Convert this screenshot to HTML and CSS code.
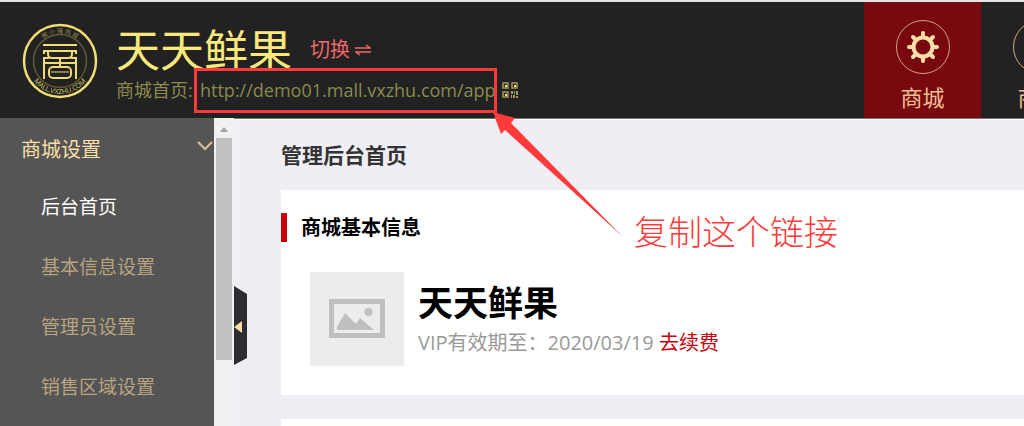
FILE: index.html
```html
<!DOCTYPE html>
<html lang="zh-CN">
<head>
    <meta charset="UTF-8">
    <meta name="viewport" content="width=device-width, initial-scale=1.0">
    <title>管理后台首页</title>
    <link rel="stylesheet" href="styles.css">
</head>
<body>
    <header class="header">
        <svg class="logo" viewBox="0 0 76 76" aria-hidden="true">
            <defs>
                <path id="arc-top" d="M10 38a28 28 0 0 1 56 0"/>
                <path id="arc-bottom" d="M5 38a33 33 0 0 0 66 0"/>
            </defs>
            <circle cx="38" cy="38" r="36" fill="none" stroke="#efdc72" stroke-width="2.5"/>
            <circle cx="38" cy="38" r="26.5" fill="none" stroke="#5f5936" stroke-width="1.5"/>
            <text class="logo-top" text-anchor="middle"><textPath href="#arc-top" startOffset="50%">微 小 猪 商 城</textPath></text>
            <text class="logo-bottom" text-anchor="middle"><textPath href="#arc-bottom" startOffset="50%">MALL.VXZHU.COM</textPath></text>
            <g fill="none" stroke="#efdc72" stroke-width="2">
                <path d="M21 22h34M21 28h34M22 27v4M54 27v4M22 56V35h5M54 56V35h-5M22 40h32M38 35v9"/>
                <path d="M26 28v3q0 4 4 4h16q4 0 4-4v-3"/>
                <rect x="27" y="44" width="22" height="11" rx="4"/>
                <path d="M29 49h18" stroke-width="1"/>
            </g>
        </svg>
        <div class="shop">
            <div class="shop-top">
                <span class="shop-name">天天鲜果</span>
                <a class="switch" href="#">切换
                    <svg width="16" height="14" viewBox="0 0 16 14" aria-hidden="true"><path d="M0 5h15l-4-3M16 9H1l4 3" fill="none" stroke="#f0686a" stroke-width="1.5"/></svg>
                </a>
            </div>
            <div class="shop-url">
                <span class="url-label">商城首页:</span>
                <a class="url" href="#">http://demo01.mall.vxzhu.com/app</a>
                <svg class="qr" viewBox="0 0 16 16" aria-hidden="true">
                    <path d="M1 1h5v5H1zM10 1h5v5h-5zM1 10h5v5H1z" fill="none" stroke="#a39b57" stroke-width="1.5"/>
                    <path d="M3 3h2v2H3zM12 3h2v2h-2zM3 12h2v2H3z" fill="#f5e98c"/>
                    <path d="M9 9h2v3H9zM12 9h1v3h-1zM14 9h2v4h-2zM9 13h1v3H9zM11 13h2v3h-2zM14 14h2v2h-2z" fill="#a39b57"/>
                </svg>
            </div>
        </div>
        <nav class="nav">
            <a class="nav-item active" href="#">
                <span class="nav-icon">
                    <svg width="34" height="34" viewBox="-17 -17 34 34" aria-hidden="true">
                        <circle r="9.5" fill="none" stroke="#f8dfa8" stroke-width="4"/>
                        <g stroke="#f8dfa8" stroke-width="4" stroke-linecap="round">
                            <path d="M0-10V-14M0 10V14M-10 0H-14M10 0H14M-7-7l-3-3M7 7l3 3M-7 7l-3 3M7-7l3-3"/>
                        </g>
                    </svg>
                </span>
                <span>商城</span>
            </a>
            <a class="nav-item" href="#">
                <span class="nav-icon"></span>
                <span>商品</span>
            </a>
        </nav>
    </header>

    <div class="layout">
        <aside class="sidebar">
            <button class="menu-title" type="button">
                <span>商城设置</span>
                <svg width="16" height="14" viewBox="0 0 16 14" aria-hidden="true"><path d="M1 1l7 7 7-7" fill="none" stroke="#d9c296" stroke-width="2"/></svg>
            </button>
            <ul class="menu">
                <li><a class="current" href="#">后台首页</a></li>
                <li><a href="#">基本信息设置</a></li>
                <li><a href="#">管理员设置</a></li>
                <li><a href="#">销售区域设置</a></li>
            </ul>
        </aside>
        <div class="scrollbar">
            <div class="scroll-up"></div>
            <div class="scroll-thumb"></div>
        </div>
        <main class="main">
            <button class="collapse" type="button" aria-label="收起">
                <svg width="14" height="80" viewBox="0 0 14 80" aria-hidden="true">
                    <path d="M0 0l13 8v64L0 79z" fill="#2f2c31"/>
                    <path d="M0 41l8-6v12z" fill="#f8dfa8"/>
                </svg>
            </button>
            <h1 class="page-title">管理后台首页</h1>
            <section class="card">
                <h2 class="card-title">商城基本信息</h2>
                <div class="info">
                    <div class="thumb">
                        <svg width="56" height="40" viewBox="0 0 56 40" aria-hidden="true">
                            <rect x="2.5" y="2.5" width="51" height="34" fill="none" stroke="#bfbfbf" stroke-width="5"/>
                            <circle cx="39.5" cy="13" r="4" fill="#bfbfbf"/>
                            <path d="M8 31v-3l8-14 11 11 4-6 14 12z" fill="#bfbfbf"/>
                        </svg>
                    </div>
                    <div>
                        <div class="info-name">天天鲜果</div>
                        <div class="info-vip">VIP有效期至：2020/03/19 <a href="#">去续费</a></div>
                    </div>
                </div>
            </section>
            <section class="card"></section>
        </main>
    </div>

    <!-- 标注 -->
    <div class="mark-box"></div>
    <svg class="mark-arrow" width="130" height="125" viewBox="0 0 130 125" aria-hidden="true">
        <path d="M0 0l22 6-4 5 111 113L12 18l-4 4z" fill="#fe3a3a"/>
    </svg>
    <div class="mark-text">复制这个链接</div>
</body>
</html>
```
FILE: styles.css
```css
* {
    box-sizing: border-box;
}

body {
    margin: 0;
    height: 100vh;
    display: flex;
    flex-direction: column;
    position: relative;
    overflow: hidden;
    border-top: 2px solid #e3e6e8;
    background-color: #efeef5;
    font-family: "Open Sans", "Noto Sans CJK SC", sans-serif;
}

a {
    text-decoration: none;
}

button {
    border: 0;
    padding: 0;
    background: none;
    font-family: inherit;
    cursor: pointer;
}

.header {
    display: flex;
    flex-shrink: 0;
    height: 116px;
    background-color: #222222;
}

.logo {
    flex-shrink: 0;
    width: 76px;
    height: 76px;
    margin: 21px 18px 0 22px;
}

.logo-top {
    font-size: 6px;
    fill: #8d8348;
}

.logo-bottom {
    font-size: 7px;
    fill: #d8c869;
}

.shop {
    flex: 1;
    padding-top: 20px;
    white-space: nowrap;
}

.shop-top {
    display: flex;
    align-items: center;
    gap: 18px;
}

.shop-name {
    font-size: 44px;
    line-height: 56px;
    color: #fbe87a;
}

.switch {
    font-size: 20px;
    line-height: 28px;
    color: #f0686a;
}

.shop-url {
    display: flex;
    align-items: center;
    line-height: 24px;
    color: #8c8a4e;
}

.url-label {
    width: 84px;
    font-size: 18px;
}

.url {
    font-size: 18px;
    color: #8c8a4e;
}

.qr {
    width: 16px;
    height: 16px;
    margin-left: 6px;
}

.nav {
    display: flex;
    flex: 0 0 160px;
    overflow: hidden;
}

.nav-item {
    display: flex;
    flex: 0 0 117px;
    flex-direction: column;
    align-items: center;
    gap: 8px;
    padding-top: 18px;
    font-size: 22px;
    line-height: 30px;
    color: #f0bf94;
}

.nav-item.active {
    background-color: #78090f;
}

.nav-icon {
    display: flex;
    align-items: center;
    justify-content: center;
    width: 54px;
    height: 54px;
    border: 1px solid #cfa77c;
    border-radius: 50%;
}

.layout {
    display: flex;
    flex: 1;
    min-height: 0;
}

.sidebar {
    flex: 0 0 214px;
    overflow: hidden;
    background-color: #555555;
}

.menu-title {
    display: flex;
    align-items: center;
    justify-content: space-between;
    width: 100%;
    height: 60px;
    padding: 0 1px 0 21px;
    font-size: 20px;
    color: #f8dfa8;
}

.menu {
    margin: 0;
    padding: 0 24px 0 41px;
    list-style: none;
}

.menu li {
    border-bottom: 1px solid #505050;
}

.menu a {
    display: block;
    font-size: 19px;
    line-height: 59px;
    color: #b8a47e;
}

.menu .current {
    color: #ffffff;
}

.scrollbar {
    flex: 0 0 20px;
    padding: 0 2px;
    background-color: #f1f1f1;
}

.scroll-up {
    width: 8px;
    height: 20px;
    margin: 0 auto;
    background-color: #a3a3a3;
    clip-path: polygon(50% 45%, 100% 70%, 0 70%);
}

.scroll-thumb {
    height: 222px;
    background-color: #c1c1c1;
}

.main {
    position: relative;
    flex: 1;
    padding-left: 47px;
    overflow: hidden;
    border-top: 1px solid #777777;
    box-shadow: inset 0 1px 0 #ffffff;
}

.collapse {
    position: absolute;
    top: 167px;
    left: 0;
}

.collapse svg {
    display: block;
}

.page-title {
    margin: 0;
    padding: 21px 0 19px;
    font-size: 21px;
    line-height: 31px;
    color: #333333;
}

.card {
    min-height: 100px;
    margin-bottom: 24px;
    padding: 23px 0 29px;
    background-color: #ffffff;
}

.card-title {
    margin: 0;
    padding-left: 14px;
    border-left: 6px solid #c7000b;
    font-size: 20px;
    line-height: 29px;
    color: #000000;
}

.info {
    display: flex;
    gap: 14px;
    padding: 30px 0 0 29px;
}

.thumb {
    display: flex;
    align-items: center;
    justify-content: center;
    width: 94px;
    height: 94px;
    background-color: #ececec;
}

.info-name {
    padding-top: 8px;
    font-size: 35px;
    font-weight: bold;
    line-height: 46px;
}

.info-vip {
    font-size: 20px;
    line-height: 34px;
    color: #999999;
}

.info-vip a {
    color: #c7000b;
}

.mark-box {
    position: absolute;
    top: 66px;
    left: 194px;
    width: 303px;
    height: 45px;
    border: 3px solid #fe3a3a;
}

.mark-arrow {
    position: absolute;
    top: 110px;
    left: 493px;
}

.mark-text {
    position: absolute;
    top: 206px;
    left: 634px;
    font-size: 34px;
    font-weight: 300;
    line-height: 48px;
    color: #fe3a3a;
}
```
